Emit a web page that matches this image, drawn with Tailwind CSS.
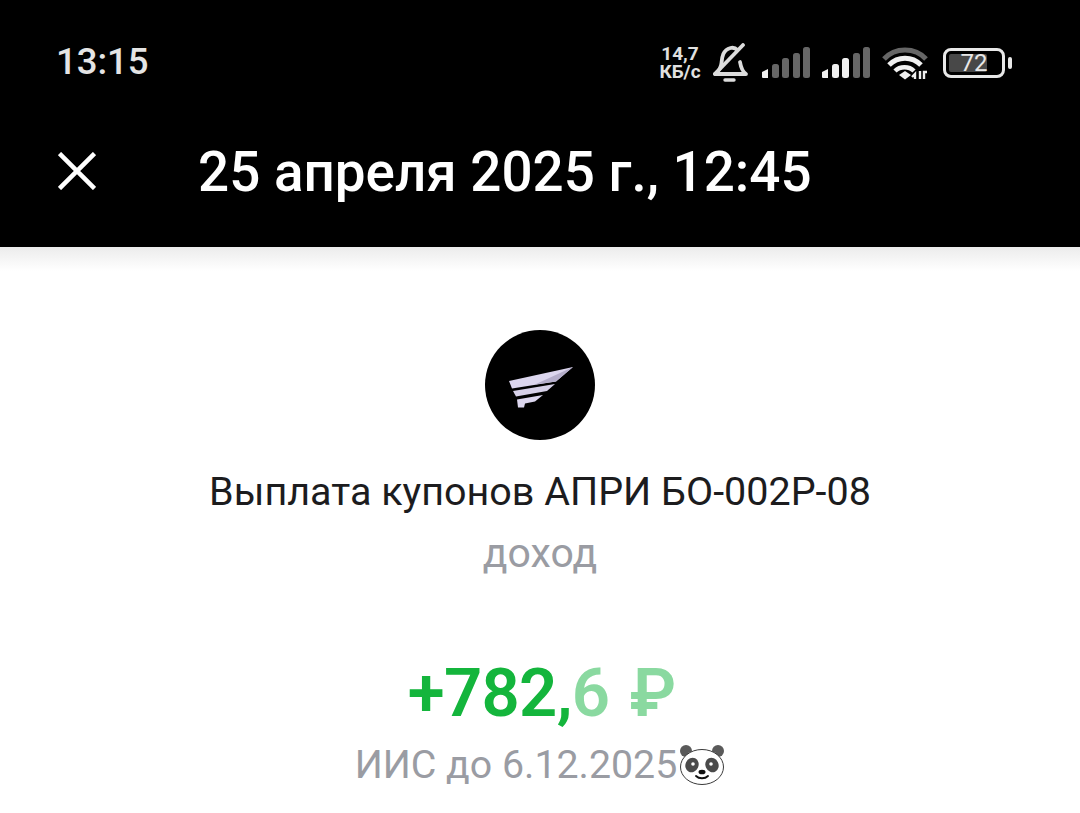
<!DOCTYPE html>
<html lang="en">
<head>
    <meta charset="UTF-8">
    <meta name="viewport" content="width=device-width, initial-scale=1.0">
    <title>Операция</title>
    <script src="https://cdn.jsdelivr.net/npm/@tailwindcss/browser@4"></script>
</head>
<body class="bg-white font-['Roboto',sans-serif] overflow-hidden">
    <div class="w-[1080px] h-[813px] flex flex-col">
        <!-- Header -->
        <header class="h-[247px] bg-black text-white shrink-0 flex flex-col">
            <!-- Status bar -->
            <div class="h-[125px] shrink-0 pl-[56px] pr-[68px] flex items-center justify-between">
                <span class="text-[36.500px] leading-none font-medium text-[#e4e4e4]">13:15</span>
                <div class="flex items-center">
                    <div class="w-[42px] flex flex-col items-center font-bold text-[#e0e0e0] leading-[18px] text-[19px] mr-[12px] whitespace-nowrap">
                        <span>14,7</span>
                        <span>КБ/с</span>
                    </div>
                    <svg class="w-[36px] h-[40px] mr-[13px]" viewBox="0 0 36 40" fill="none" stroke="#dcdcdc" stroke-width="3.800" stroke-linecap="round" stroke-linejoin="round">
                        <path d="M2 31h31c-3-2-5-6-6-12"/>
                        <path d="M3 30c3-2.500 5-5 5.500-10 .5-5 1-13 9-15 2.500-.6 5 0 7 2"/>
                        <path d="M30 2 2 31" />
                        <path d="M12 37h9" stroke-width="3.400"/>
                    </svg>
                    <svg class="w-[48px] h-[31px] mr-[12px]" viewBox="0 0 48 31">
                        <path d="M0 25l6-3v9H1a1 1 0 0 1-1-1z" fill="#f0f0f0"/>
                        <rect x="10" y="17" width="7" height="14" rx="2.500" fill="#666666"/>
                        <rect x="20" y="11" width="7" height="20" rx="2.500" fill="#666666"/>
                        <rect x="31" y="6" width="7" height="25" rx="2.500" fill="#666666"/>
                        <rect x="41" y="0" width="7" height="31" rx="2.500" fill="#666666"/>
                    </svg>
                    <svg class="w-[48px] h-[31px] mr-[12px]" viewBox="0 0 48 31">
                        <path d="M0 25l6-3v9H1a1 1 0 0 1-1-1z" fill="#f0f0f0"/>
                        <rect x="10" y="17" width="7" height="14" rx="2.500" fill="#f0f0f0"/>
                        <rect x="20" y="11" width="7" height="20" rx="2.500" fill="#f0f0f0"/>
                        <rect x="31" y="6" width="7" height="25" rx="2.500" fill="#666666"/>
                        <rect x="41" y="0" width="7" height="31" rx="2.500" fill="#666666"/>
                    </svg>
                    <svg class="w-[46px] h-[34px] mr-[15px]" viewBox="0 0 46 34" fill="none">
                        <path d="M2 13C13 1 33 1 44 13" stroke="#666666" stroke-width="5"/>
                        <path d="M7 19c9-9 23-9 32 0" stroke="#f0f0f0" stroke-width="5"/>
                        <path d="M13 25c5-5 14-5 19 0" stroke="#f0f0f0" stroke-width="4.500"/>
                        <path d="M17 29l6-4 6 4-6 4.500z" fill="#f0f0f0"/>
                        <path d="M33 33v-5l-3 3M38 25v8M42 33v-7h3" stroke="#f0f0f0" stroke-width="2.400"/>
                    </svg>
                    <!-- Battery -->
                    <div class="flex items-center">
                        <div class="relative w-[62px] h-[30px] rounded-[8px] border-[3px] border-[#e8e8e8] flex items-center justify-center overflow-hidden">
                            <div class="absolute left-[3px] top-[3px] bottom-[3px] w-[38px] rounded-[2px] bg-[#484848]"></div>
                            <span class="relative text-[24px] leading-none text-[#e8e8e8]">72</span>
                        </div>
                        <div class="ml-[3px] w-[4px] h-[12px] rounded-[2px] bg-[#e8e8e8]"></div>
                    </div>
                </div>
            </div>
            <!-- Title bar -->
            <div class="flex items-center h-[94px] pl-[58px]">
                <svg class="w-[38px] h-[38px] mr-[102px] -mt-[3px]" viewBox="0 0 38 38" fill="none" stroke="#ffffff" stroke-width="4.500">
                    <path d="M1.500 1.500l35 35M36.500 1.500l-35 35"/>
                </svg>
                <h1 class="text-[54.800px] leading-none font-medium whitespace-nowrap">25 апреля 2025 г., 12:45</h1>
            </div>
        </header>

        <!-- Body -->
        <main class="relative flex-1 flex flex-col items-center bg-white">
            <div class="absolute top-0 left-0 right-0 h-[24px] bg-gradient-to-b from-[#ececec] to-white"></div>
            <div class="relative mt-[83px] w-[110px] h-[110px] rounded-full bg-black flex items-center justify-center">
                <svg class="w-[110px] h-[110px]" viewBox="0 0 110 110">
                    <path d="M24 51 88 37 71 51.500 27 58.500z" fill="#dcd6ee"/>
                    <path d="M88 37 71 51.500 50 54.500z" fill="#b5aecb"/>
                    <path d="M28 61 70 54 62 61 31 66.500z" fill="#d6d0e8"/>
                    <path d="M32 69.500 58 65 50 71.500 40 73.500 39 77.500 33 77.500z" fill="#dcd6ee"/>
                </svg>
            </div>
            <p class="mt-[30px] text-[39.500px] leading-[44px] text-[#1c1c1e] whitespace-nowrap">Выплата купонов АПРИ БО-002Р-08</p>
            <p class="mt-[17px] text-[41px] leading-[44px] text-[#9a9ca3] whitespace-nowrap">доход</p>
            <p class="mt-[80px] pl-[4px] text-[67px] leading-[76px] font-semibold text-[#14b53c] whitespace-nowrap"><span class="tracking-[-0.7px]">+782,</span><span class="text-[#8ad9a0]">6<span class="ml-[3px]"> ₽</span></span></p>
            <div class="mt-[12px] flex items-center text-[39.300px] leading-[44px] text-[#9a9ca3] whitespace-nowrap">
                <span>ИИС до 6.12.2025</span>
                <svg class="w-[46px] h-[42px] ml-[2px]" viewBox="0 0 46 42">
                    <circle cx="7" cy="7" r="6" fill="#5a5a5a"/>
                    <circle cx="39" cy="7" r="6" fill="#5a5a5a"/>
                    <ellipse cx="23" cy="23" rx="21.500" ry="17.500" fill="#ffffff" stroke="#3a3a3a" stroke-width="1"/>
                    <ellipse cx="13" cy="21" rx="6.500" ry="7.500" fill="#4a4a4a" transform="rotate(25 13 21)"/>
                    <ellipse cx="33" cy="21" rx="6.500" ry="7.500" fill="#4a4a4a" transform="rotate(-25 33 21)"/>
                    <circle cx="14" cy="20" r="1.800" fill="#ffffff"/>
                    <circle cx="32" cy="20" r="1.800" fill="#ffffff"/>
                    <ellipse cx="23" cy="28" rx="3.500" ry="2.300" fill="#111111"/>
                    <path d="M17 32c3 3 9 3 12 0" fill="none" stroke="#111111" stroke-width="1.800" stroke-linecap="round"/>
                </svg>
            </div>
        </main>
    </div>
</body>
</html>
